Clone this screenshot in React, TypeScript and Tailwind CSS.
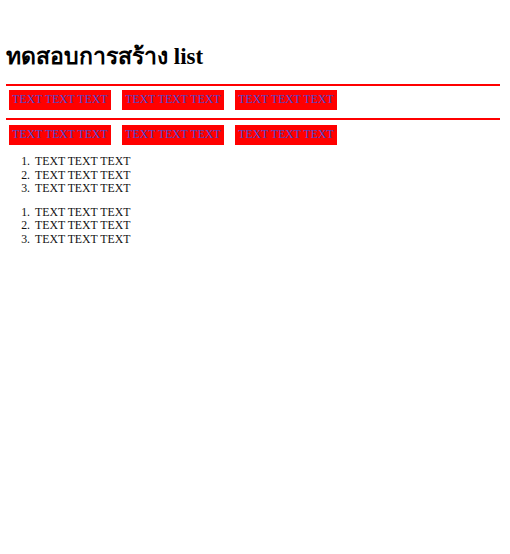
export default function App() {
  const items = ["TEXT TEXT TEXT", "TEXT TEXT TEXT", "TEXT TEXT TEXT"];
  const Row = () => (
    <div className="flex gap-[11px] pl-[3px] pt-[4px]">
      {items.map((t, i) => (
        <div key={i} className="bg-[#ff0000] text-[#4b4bd0] h-[20px] w-[102px] flex items-center justify-center text-[11.8px] leading-none">
          {t}
        </div>
      ))}
    </div>
  );
  const List = () => (
    <ol className="text-[11.8px] leading-[13.5px] text-[#111]">
      {items.map((t, i) => (
        <li key={i} className="flex">
          <span className="w-[24px] text-right">{i + 1}.</span>
          <span className="ml-[5px]">{t}</span>
        </li>
      ))}
    </ol>
  );
  return (
    <div className="w-[510px] h-[554px] bg-white" style={{ fontFamily: '"Liberation Serif", "Noto Sans", "DejaVu Serif", serif' }}>
      <div className="pt-[42px] px-[6px]">
        <h1 className="text-[23px] font-bold leading-[30px] text-black">ทดสอบการสร้าง list</h1>
        <div className="mt-[12px] w-[494px] h-[2px] bg-[#ff0000]" />
        <Row />
        <div className="mt-[8px] w-[494px] h-[2px] bg-[#ff0000]" />
        <div className="pt-[1px]">
          <Row />
        </div>
        <div className="mt-[10px]">
          <List />
        </div>
        <div className="mt-[10px]">
          <List />
        </div>
      </div>
    </div>
  );
}
